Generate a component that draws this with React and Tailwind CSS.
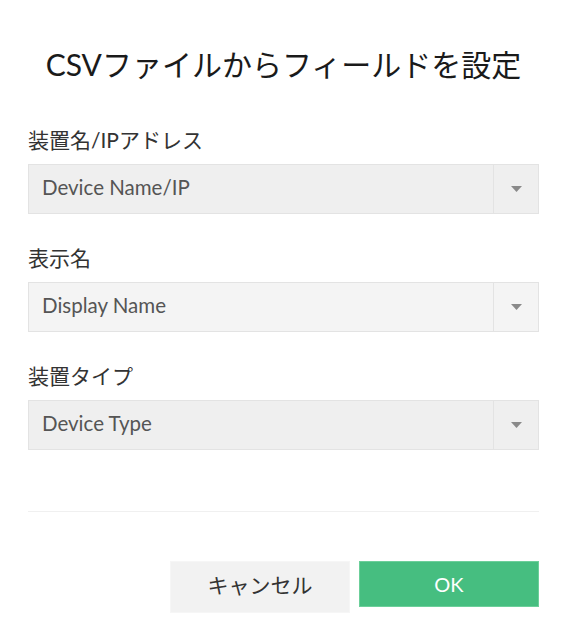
import React from "react";

const font = { fontFamily: "Lato, 'Noto Sans CJK JP', sans-serif" };

function Select({ value, bg }) {
  return (
    <div className={`mt-[12px] flex h-[50px] w-full items-stretch border border-[#e3e3e3] ${bg}`}>
      <div className="flex flex-1 items-center pb-[3px] pl-[13px] text-[20.5px] text-[#555555]">{value}</div>
      <div className="flex w-[45px] items-center justify-center border-l border-[#e3e3e3]">
        <svg width="11" height="6" viewBox="0 0 11 6">
          <path d="M0 0 L11 0 L5.5 6 Z" fill="#8a8a8a" />
        </svg>
      </div>
    </div>
  );
}

function Field({ label, value, bg, first }) {
  return (
    <div className={first ? "mt-[44px]" : "mt-[32px]"}>
      <div className="text-[21px] leading-[24px] text-[#333333]">{label}</div>
      <Select value={value} bg={bg} />
    </div>
  );
}

export default function App() {
  return (
    <div className="h-[633px] w-[567px] bg-white px-[28px]" style={font}>
      <div className="pt-[44px] text-center text-[30px] leading-[40px] text-[#1a1a1a]">
        CSVファイルからフィールドを設定
      </div>
      <Field first label="装置名/IPアドレス" value="Device Name/IP" bg="bg-[#efefef]" />
      <Field label="表示名" value="Display Name" bg="bg-[#f4f4f4]" />
      <Field label="装置タイプ" value="Device Type" bg="bg-[#efefef]" />
      <div className="mt-[61px] border-t border-[#f0f0f0]" />
      <div className="mt-[49px] flex items-start justify-end gap-[9px]">
        <button className="flex h-[52px] w-[180px] items-center justify-center border border-[#f6f6f6] bg-[#f2f2f2] pb-[4px] text-[21px] text-[#333333]">
          キャンセル
        </button>
        <button className="flex h-[46px] w-[180px] items-center justify-center border border-[#6ccf9a] bg-[#46be80] pb-[1px] text-[20px] text-white">
          OK
        </button>
      </div>
    </div>
  );
}
